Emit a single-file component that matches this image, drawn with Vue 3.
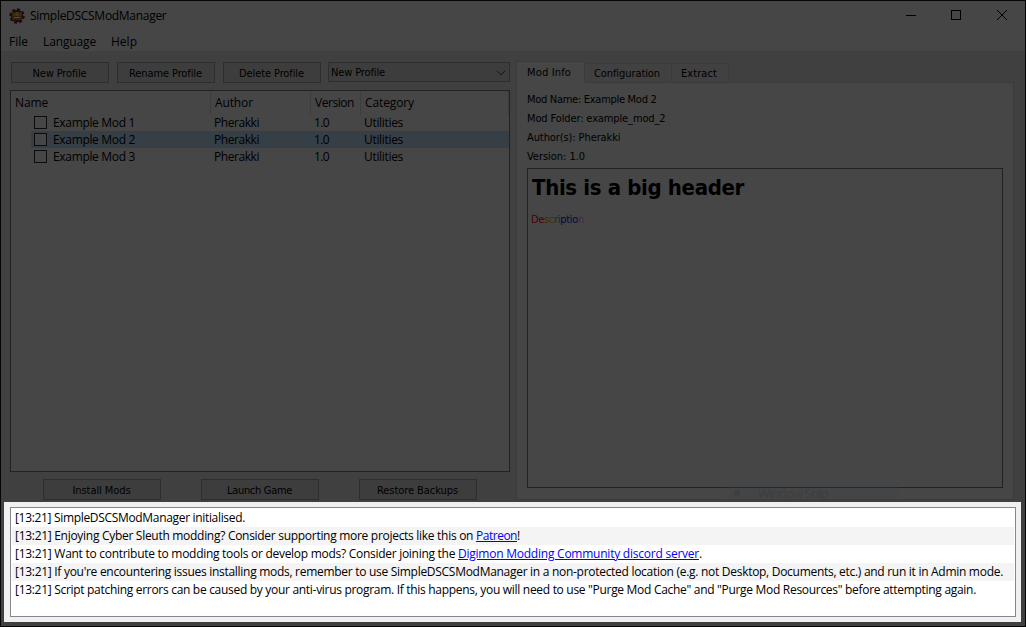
<script setup>
const buttons = [
  { label: 'New Profile', w: 54 },
  { label: 'Rename Profile', w: 73 },
  { label: 'Delete Profile', w: 65 },
]
const columns = [
  { label: 'Name', w: 33 },
  { label: 'Author', w: 38 },
  { label: 'Version', w: 39 },
  { label: 'Category', w: 49 },
]
const mods = [
  { name: 'Example Mod 1', selected: false },
  { name: 'Example Mod 2', selected: true },
  { name: 'Example Mod 3', selected: false },
]
const actions = [
  { label: 'Install Mods', w: 58 },
  { label: 'Launch Game', w: 65 },
  { label: 'Restore Backups', w: 81 },
]
const tabs = [
  { label: 'Mod Info', w: 44 },
  { label: 'Configuration', w: 66 },
  { label: 'Extract', w: 36 },
]
const info = [
  { text: 'Mod Name: Example Mod 2', w: 129.5 },
  { text: 'Mod Folder: example_mod_2', w: 138.5 },
  { text: 'Author(s): Pherakki', w: 93.5 },
  { text: 'Version: 1.0', w: 58 },
]
const letters = [
  ['De', '#460308'], ['s', '#4a2507'], ['c', '#453008'], ['r', '#083a0c'],
  ['i', '#082c30'], ['p', '#03034a'], ['tio', '#10053f'], ['n', '#4a2450'],
]
const log = [
  [{ t: '[13:21] SimpleDSCSModManager initialised.', w: 230 }],
  [
    { t: '[13:21] Enjoying Cyber Sleuth modding? Consider supporting more projects like this on ', w: 461 },
    { t: 'Patreon', w: 41, link: true },
    { t: '!', w: 3 },
  ],
  [
    { t: '[13:21] Want to contribute to modding tools or develop mods? Consider joining the ', w: 443 },
    { t: 'Digimon Modding Community discord server', w: 241, link: true },
    { t: '.', w: 3 },
  ],
  [{ t: "[13:21] If you're encountering issues installing mods, remember to use SimpleDSCSModManager in a non-protected location (e.g. not Desktop, Documents, etc.) and run it in Admin mode.", w: 988 }],
  [{ t: '[13:21] Script patching errors can be caused by your anti-virus program. If this happens, you will need to use "Purge Mod Cache" and "Purge Mod Resources" before attempting again.', w: 961 }],
]

// Tracks a label so that it fills the given advance width.
const vFit = {
  mounted(el, { value }) {
    const natural = el.getBoundingClientRect().width
    el.style.letterSpacing = `${(value - natural) / el.textContent.length}px`
  },
}
</script>

<template>
  <div class="window">
    <header class="titlebar">
      <svg class="logo" width="16" height="16" viewBox="0 0 16 16">
        <circle cx="8" cy="8" r="6.8" fill="none" stroke="#190b10" stroke-width="1.8" stroke-dasharray="3 2.34" />
        <circle cx="8" cy="8" r="6.2" fill="#1b0c10" />
        <rect x="3" y="4" width="10" height="8.5" rx="1" fill="#30200c" />
        <path d="M4 5h3v3H4zM9 5h3v3H9z" fill="#3a2c12" />
        <path d="M8 4v4M5 9.5h6" stroke="#564a38" stroke-width="1" />
        <path d="M3 12.5h10" stroke="#220b0b" />
      </svg>
      <span v-fit="136.5" class="title">SimpleDSCSModManager</span>
      <svg class="controls" width="104" height="12" viewBox="0 0 104 12" fill="none" stroke="#000">
        <path d="M0 6.5h10" />
        <rect x="45.5" y="1.5" width="9" height="9" />
        <path d="M91 1l10 10M101 1l-10 10" />
      </svg>
    </header>
    <nav class="menu">
      <span v-fit="19">File</span>
      <span v-fit="53">Language</span>
      <span v-fit="26">Help</span>
    </nav>

    <main class="body">
      <section class="left">
        <div class="profiles">
          <div v-for="b in buttons" :key="b.label" class="btn"><span v-fit="b.w">{{ b.label }}</span></div>
          <div class="combo">
            <span v-fit="54">New Profile</span>
            <svg width="10" height="6" viewBox="0 0 10 6" fill="none" stroke="#111"><path d="M1 .8l4 4 4-4" /></svg>
          </div>
        </div>
        <div class="tree">
          <div class="row head">
            <div v-for="c in columns" :key="c.label" class="cell"><span v-fit="c.w">{{ c.label }}</span></div>
          </div>
          <div v-for="m in mods" :key="m.name" class="row item" :class="{ selected: m.selected }">
            <div class="cell name"><i class="check"></i><span v-fit="82">{{ m.name }}</span></div>
            <div class="cell"><span v-fit="45">Pherakki</span></div>
            <div class="cell"><span v-fit="15">1.0</span></div>
            <div class="cell"><span v-fit="39">Utilities</span></div>
          </div>
        </div>
        <div class="actions">
          <div v-for="a in actions" :key="a.label" class="btn"><span v-fit="a.w">{{ a.label }}</span></div>
        </div>
      </section>

      <section class="right">
        <div class="tabs">
          <div v-for="(t, i) in tabs" :key="t.label" class="tab" :class="{ active: i === 0 }"><span v-fit="t.w">{{ t.label }}</span></div>
        </div>
        <div class="page">
          <p v-for="l in info" :key="l.text" class="info"><span v-fit="l.w">{{ l.text }}</span></p>
          <div class="browser">
            <h1><span v-fit="212">This is a big header</span></h1>
            <p class="desc"><span v-fit="53"><span v-for="[t, c] in letters" :key="t" :style="{ color: c }">{{ t }}</span></span></p>
          </div>
        </div>
        <div class="ghost"><i></i><span v-fit="70">Window Snip</span></div>
      </section>
    </main>

    <footer class="console">
      <div class="log">
        <div v-for="(line, i) in log" :key="i" class="line"><span v-for="s in line" :key="s.t" v-fit="s.w" :class="{ link: s.link }">{{ s.t }}</span></div>
      </div>
    </footer>
  </div>
</template>

<style>
body { margin: 0; overflow: hidden; }
</style>

<style scoped>
* { box-sizing: border-box; }
.window {
  width: 1026px; height: 627px; border: 1px solid #050505; background: #404040; color: #000;
  display: flex; flex-direction: column;
  font: 12px/16px "Open Sans", "Noto Sans", sans-serif; white-space: pre;
}
span { display: inline-block; }
.titlebar { height: 30px; padding: 0 15px 0 8px; background: #464646; display: flex; align-items: center; flex: none; }
.title { margin-left: 5px; }
.controls { margin-left: auto; margin-top: -2px; }
.menu { height: 20px; padding: 3px 8px 0; background: #464646; display: flex; gap: 15px; flex: none; }
.body { height: 451px; display: flex; flex: none; }
.left { width: 500px; margin-left: 9px; padding-top: 11px; flex: none; }
.btn, .combo, .tab, .info, .desc { font: 11px/14px "DejaVu Sans Condensed", "DejaVu Sans", sans-serif; }
.profiles { display: flex; padding-left: 1px; gap: 8px; height: 28px; }
.btn { width: 98px; height: 21px; border: 1px solid #2e2e2e; background: #3d3d3d; display: flex; align-items: center; justify-content: center; padding: 2px 1px 0 0; }
.combo { width: 182px; height: 20px; margin-left: -1px; padding: 2px 3px 0 2px; border: 1px solid #2e2e2e; background: #3d3d3d; display: flex; align-items: center; justify-content: space-between; }
.tree { height: 382px; border: 1px solid #202226; background: #464646; }
.row { display: grid; grid-template-columns: 200px 100px 50px 148px; }
.head { height: 23px; line-height: 24px; }
.head .cell { border-right: 1px solid #3d3d3d; padding-left: 4px; }
.item { height: 17px; line-height: 17px; }
.item .cell { padding-left: 3px; }
.item .name { padding-left: 0; margin-left: 20px; display: flex; align-items: center; }
.check { width: 13px; height: 13px; margin: 0 6px 0 3px; border: 1px solid #0c0c0c; background: #464646; }
.selected { background: linear-gradient(90deg, transparent 20px, #363f46 20px); }
.actions { display: flex; gap: 40px; padding: 7px 0 0 33px; }
.actions .btn { width: 118px; }
.right { position: relative; width: 498px; margin-left: 6px; padding-top: 10px; height: 449px; display: flex; flex-direction: column; flex: none; }
.tabs { display: flex; align-items: flex-end; height: 21px; flex: none; }
.tab { height: 19px; border: 1px solid #3b3b3b; border-left: 0; border-bottom: 0; background: #414141; display: flex; align-items: center; justify-content: center; width: 58px; padding: 1px 2px 0 0; }
.tab:nth-child(2) { width: 87px; }
.tab:nth-child(3) { width: 57px; }
.tab.active { width: 69px; height: 22px; margin-bottom: -1px; border-left: 1px solid #3b3b3b; background: #464646; position: relative; padding: 0 3px 0 0; z-index: 1; }
.page { flex: 1; border: 1px solid #3b3b3b; background: #464646; padding: 7px 10px 11px; display: flex; flex-direction: column; }
.info { height: 19px; line-height: 19px; margin: 0; flex: none; }
.browser { flex: 1; margin-top: 2px; border: 1px solid #202226; padding: 5px 3px; }
h1 { margin: 0 0 0 1px; font: bold 22px/27px "DejaVu Sans Condensed", "DejaVu Sans", sans-serif; }
.desc { margin: 12px 0 0; }
.desc span span { display: inline; }
.ghost { position: absolute; left: 210px; bottom: -3px; width: 173px; height: 20px; background: rgba(60, 66, 70, .2); color: #3d3e3f; display: flex; align-items: center; padding-left: 8px; font-size: 13px; }
.ghost i { width: 6px; height: 6px; border-radius: 3px; background: #3c403f; margin-right: 18px; }
.console { width: 1017px; height: 120px; margin: 0 0 0 3px; padding: 5px 5px 5px 6px; background: #f0f0f0; flex: none; position: relative; }
.log { height: 110px; border: 1px solid #828790; background: #fff; padding: 1px; }
.line { height: 18px; line-height: 18px; padding-left: 3px; display: flex; }
.line:nth-child(even) { background: #f4f4f4; }
.link { color: #0000ff; text-decoration: underline; }
</style>
